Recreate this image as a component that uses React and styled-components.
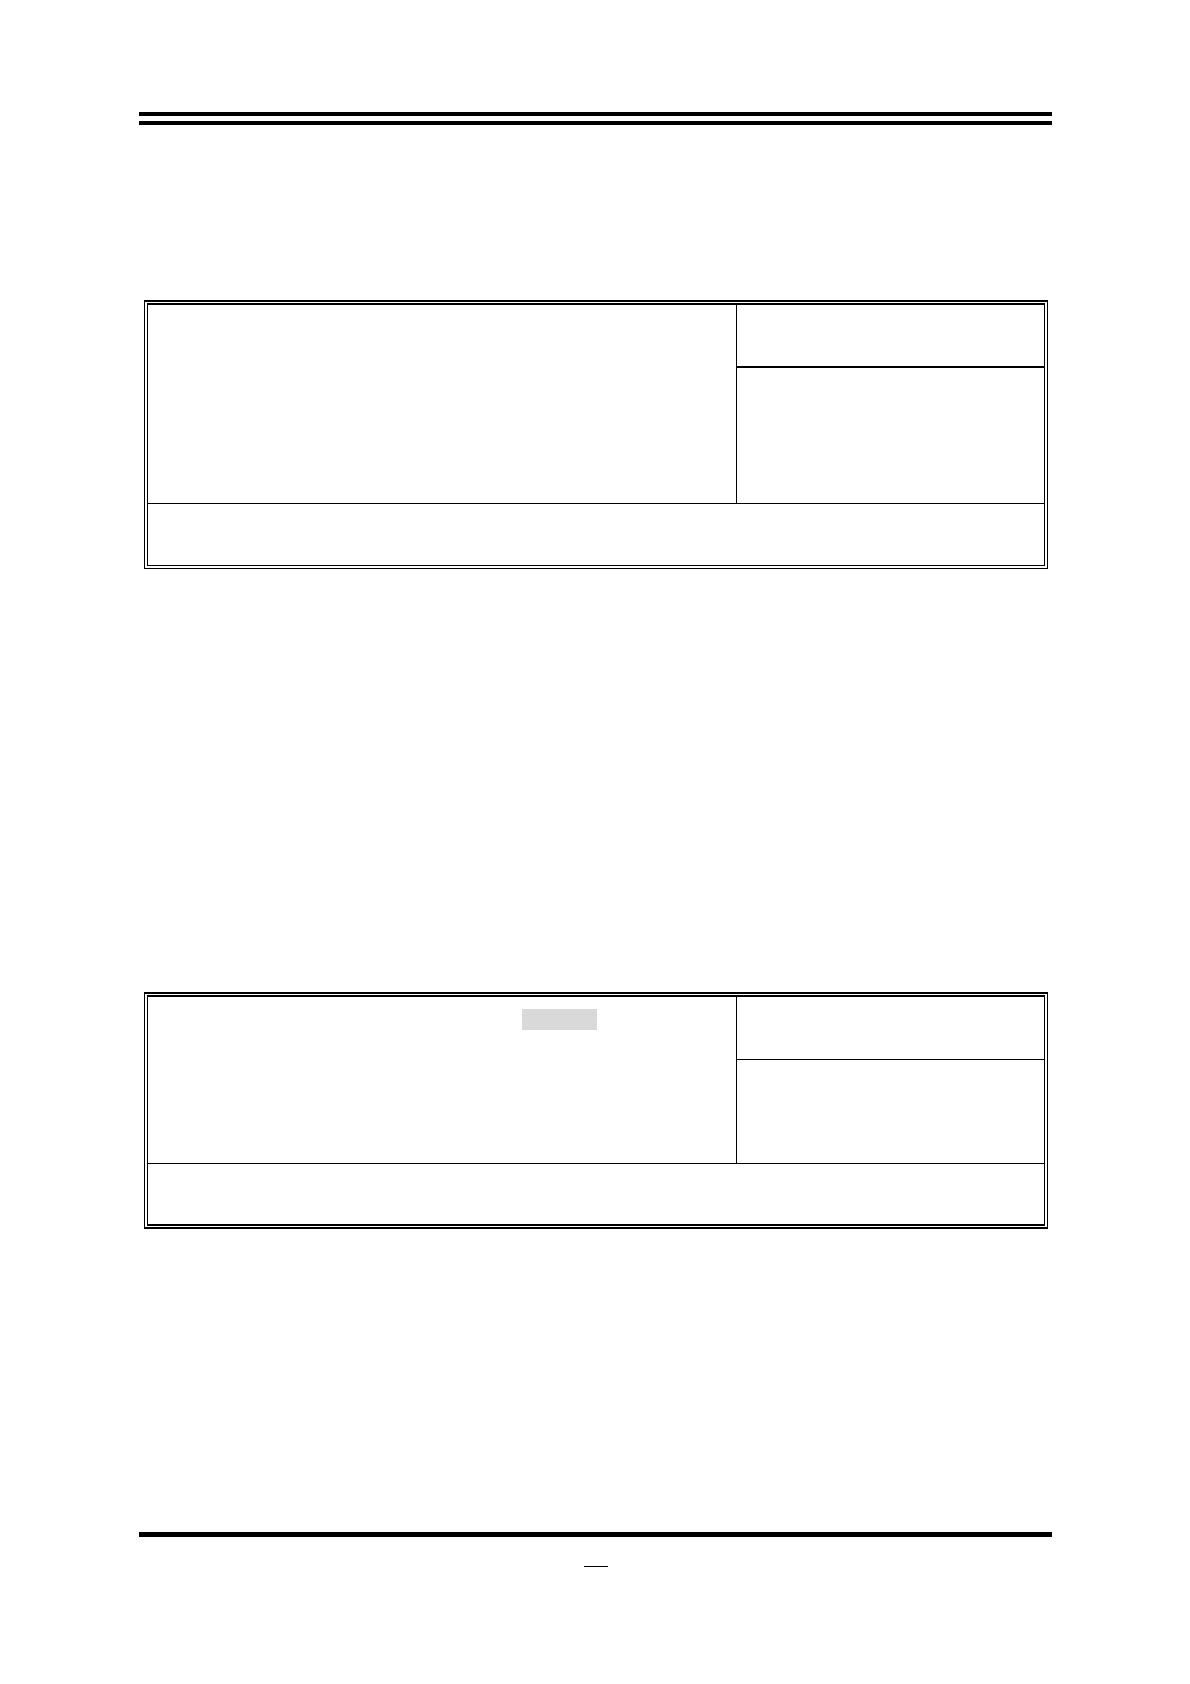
import React from 'react'
import styled, { createGlobalStyle } from 'styled-components'

const GlobalStyle = createGlobalStyle`
    body{
        margin: 0;
        background: #fff;
        color: #000;
        font-family: "Liberation Sans", Arial, sans-serif;
    }
    *{
        box-sizing: border-box;
    }
`

function App() {
    return (
        <Page>
            <GlobalStyle />
            <Header />
            <Main>
                <Panel $bottom={1}>
                    <Upper>
                        <Settings />
                        <Side>
                            <Topic $height={61} />
                            <Help $height={135} $line={2} />
                        </Side>
                    </Upper>
                    <Keys $height={61} />
                </Panel>
                <Panel $bottom={2}>
                    <Upper>
                        <Settings>
                            <Selected />
                        </Settings>
                        <Side>
                            <Topic $height={62} />
                            <Help $height={103} $line={1} />
                        </Side>
                    </Upper>
                    <Keys $height={60} />
                </Panel>
            </Main>
            <Footer>
                <PageMark />
            </Footer>
        </Page>
    )
}

function Panel({ $bottom, children }) {
    return (
        <Frame $bottom={$bottom}>
            <Inner $bottom={$bottom}>{children}</Inner>
        </Frame>
    )
}

const Page = styled.div`
    display: flex;
    flex-direction: column;
    min-height: 100vh;
    padding: 112px 138px 117px 139px;
`

const Header = styled.header`
    height: 13px;
    border-top: 4px solid #000;
    border-bottom: 4px solid #000;
`

const Main = styled.main`
    display: flex;
    flex-direction: column;
    flex: 1;
    gap: 423px;
    padding: 175px 4px 0 5px;
`

const Frame = styled.section`
    border: 1px solid #000;
    border-top-width: 2px;
    border-bottom-width: ${({ $bottom }) => $bottom}px;
    padding: 1px 2px ${({ $bottom }) => 3 - $bottom}px;
`

const Inner = styled.div`
    border: 1px solid #000;
    border-top-width: 2px;
    border-bottom-width: ${({ $bottom }) => $bottom}px;
`

const Upper = styled.div`
    display: grid;
    grid-template-columns: 588fr 308fr;
`

const Settings = styled.div`
    display: grid;
    grid-template-columns: 374fr 214fr;
    align-content: start;
    padding-top: 12px;
`

const Selected = styled.div`
    grid-column: 2;
    width: 75px;
    height: 21px;
    background: #d9d9d9;
`

const Side = styled.div`
    border-left: 1px solid #000;
`

const Topic = styled.div`
    min-height: ${({ $height }) => $height}px;
`

const Help = styled.div`
    box-sizing: content-box;
    min-height: ${({ $height }) => $height}px;
    border-top: ${({ $line }) => $line}px solid #000;
`

const Keys = styled.div`
    box-sizing: content-box;
    min-height: ${({ $height }) => $height}px;
    border-top: 1px solid #000;
`

const Footer = styled.footer`
    display: flex;
    justify-content: center;
    border-top: 5px solid #000;
    padding-top: 29px;
`

const PageMark = styled.div`
    width: 24px;
    border-top: 1px solid #000;
`

export default App
